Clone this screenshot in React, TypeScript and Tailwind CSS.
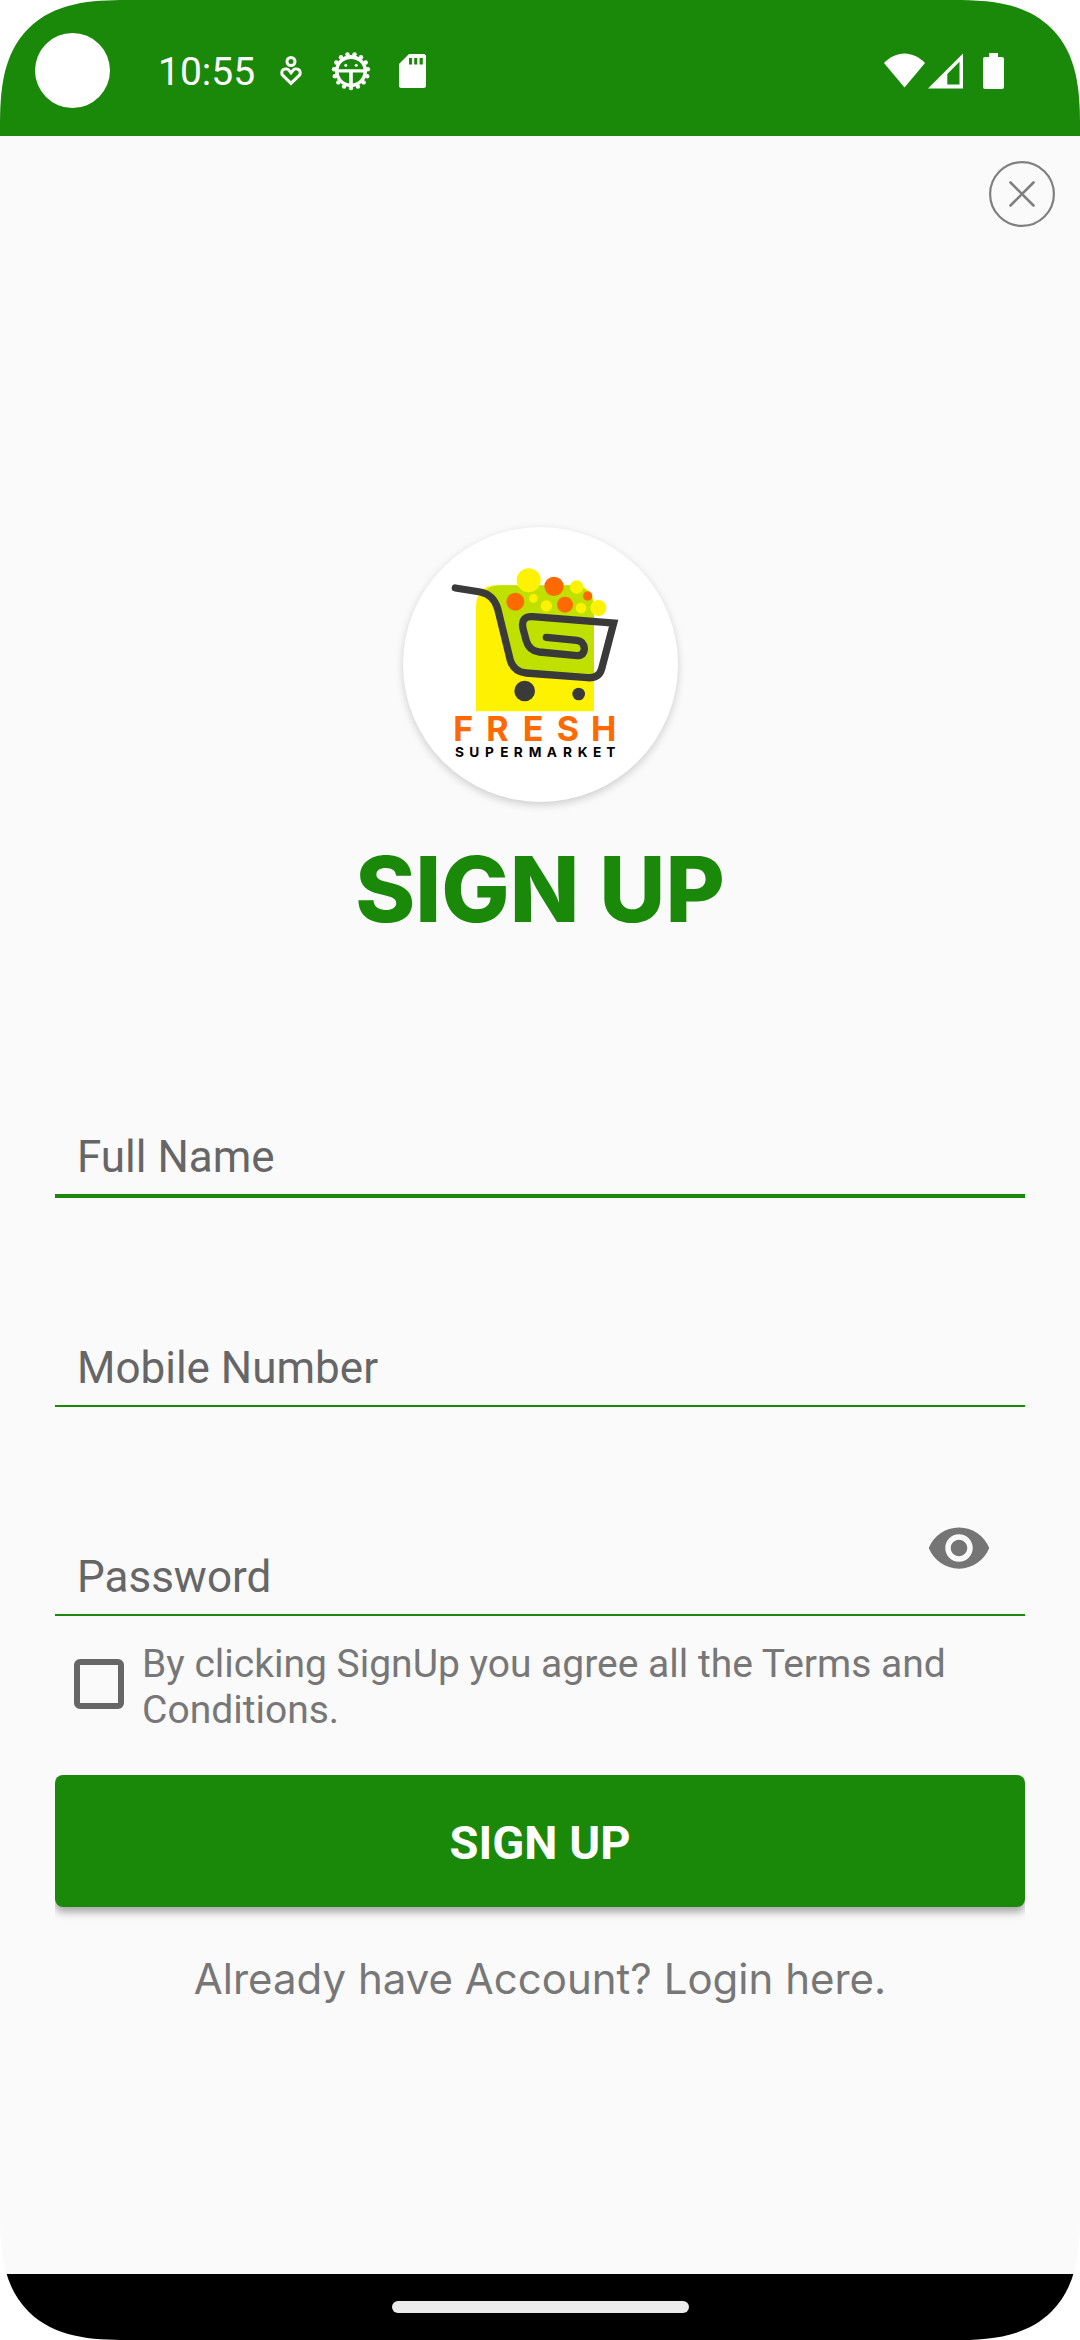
import { useState } from "react";

const GEAR_TEETH = Array.from({ length: 15 }, (_, i) => {
  const a = Math.PI / 2 + (i * 2 * Math.PI) / 15;
  return { x: 20 + 17 * Math.cos(a), y: 20 + 17 * Math.sin(a) };
});

function HeartPersonIcon() {
  return (
    <svg width="24" height="32" viewBox="0 0 24 32" fill="none" stroke="white" strokeWidth="3" aria-hidden="true">
      <circle cx="12" cy="6.5" r="4" />
      <path d="M12 28.4L3.8 20.4C2.2 18.7 2.4 15.9 4.4 14.6C6.6 13.3 9 14 10.2 15.6L12 17.8L13.8 15.6C15 14 17.4 13.3 19.6 14.6C21.6 15.9 21.8 18.7 20.2 20.4Z" />
    </svg>
  );
}

function GearIcon() {
  return (
    <svg width="40" height="40" viewBox="0 0 40 40" aria-hidden="true">
      <circle cx="20" cy="20" r="16" fill="white" />
      {GEAR_TEETH.map((t, i) => (
        <circle key={i} cx={t.x} cy={t.y} r="2.2" fill="white" />
      ))}
      <path d="M7.5 18.3C8.4 12.2 13.6 8 20 8S31.6 12.2 32.5 18.3Z" fill="#1a8808" />
      <path d="M7.6 21.6H18.2V32.6C12.6 32 8.3 27.4 7.6 21.6Z" fill="#1a8808" />
      <path d="M32.4 21.6H21.8V32.6C27.4 32 31.7 27.4 32.4 21.6Z" fill="#1a8808" />
      <circle cx="14.8" cy="14.2" r="1.5" fill="white" />
      <circle cx="25.2" cy="14.2" r="1.5" fill="white" />
    </svg>
  );
}

function SdCardIcon() {
  return (
    <svg width="27" height="34" viewBox="0 0 27 34" aria-hidden="true">
      <path d="M10 0H24.5Q27 0 27 2.5V31.5Q27 34 24.5 34H2.5Q0 34 0 31.5V10Z" fill="white" />
      <path d="M10 4H13V10.5H10ZM15.2 4H18.2V10.5H15.2ZM20.6 4H23.8V10.5H20.6Z" fill="#1a8808" />
    </svg>
  );
}

function WifiIcon() {
  return (
    <svg width="41" height="36" viewBox="0 0 41 36" aria-hidden="true">
      <path d="M20.5 34.5L0 10C6 4 13 .5 20.5 .5S35 4 41 10Z" fill="white" />
    </svg>
  );
}

function SignalIcon() {
  return (
    <svg width="35" height="36" viewBox="0 0 35 36" aria-hidden="true">
      <path fillRule="evenodd" d="M35 .5V35.5H0ZM31.5 8.8L19.3 21V31.5H31.5Z" fill="white" />
    </svg>
  );
}

function BatteryIcon() {
  return (
    <svg width="21" height="36" viewBox="0 0 21 36" aria-hidden="true">
      <path d="M6.2 0H15V4H19Q21 4 21 6V34Q21 36 19 36H2Q0 36 0 34V6Q0 4 2 4H6.2Z" fill="white" />
    </svg>
  );
}

function Logo() {
  return (
    <svg className="size-full" viewBox="36 50 825 825" role="img" aria-label="Fresh Supermarket">
      <path d="M255 603V290Q255 225 320 225H545Q609 225 609 290V603Z" fill="#fff200" />
      <path d="M280 246Q296 225 325 225H540Q609 228 609 300V503L405 488Q368 485 358 450L322 300Q310 255 280 246Z" fill="#c0e000" />
      <g fill="#fff200">
        <circle cx="413" cy="210" r="36" />
        <circle cx="557" cy="230" r="20" />
        <circle cx="427" cy="264" r="13" />
        <circle cx="466" cy="287" r="17" />
        <circle cx="570" cy="293" r="16" />
        <circle cx="622" cy="293" r="24" />
      </g>
      <g fill="#ff6a00">
        <circle cx="489" cy="228" r="29" />
        <circle cx="373" cy="274" r="27" />
        <circle cx="522" cy="283" r="24" />
        <circle cx="590" cy="257" r="14" />
      </g>
      <path
        d="M193 233L268 245Q308 253 320 295L358 450Q369 485 405 488L590 502Q624 504 632 475L668 338L425 319Q388 317 396 355L406 392Q414 421 445 425L558 436Q579 436 580 414Q578 393 558 390L466 381"
        fill="none"
        stroke="#3a3a3a"
        strokeWidth="22"
        strokeLinecap="round"
      />
      <circle cx="401" cy="542" r="31" fill="#3a3a3a" />
      <circle cx="563" cy="551" r="19" fill="#3a3a3a" />
      <text x="187 286 395 497 600" y="692" fill="#ff6a00" className="font-['Inter'] text-[102px] font-bold">
        FRESH
      </text>
      <text x="192 235 282 328 368 413 467 516 560 606 646" y="741" fill="black" className="font-['Inter'] text-[41px] font-bold">
        SUPERMARKET
      </text>
    </svg>
  );
}

const inputClass =
  "block h-[74px] w-full bg-transparent px-[22px] text-[44px] text-[#333] placeholder:text-[#666] placeholder:opacity-100 outline-none";

export default function App() {
  const [showPassword, setShowPassword] = useState(false);

  return (
    <div className="flex min-h-screen flex-col overflow-hidden rounded-[102px] bg-[#fafafa] font-['Roboto',sans-serif] supports-[corner-shape:squircle]:rounded-[127px] supports-[corner-shape:squircle]:[corner-shape:superellipse(1.45)]">
      <header className="flex h-[136px] items-center bg-[#1a8808] pt-1 pr-[76px] pl-[35px] text-white">
        <span className="size-[75px] rounded-full bg-white" />
        <time className="ml-12 pt-1 text-[39px] leading-none">10:55</time>
        <div className="ml-6 flex items-center pt-0.5">
          <HeartPersonIcon />
          <span className="ml-7 flex"><GearIcon /></span>
          <span className="ml-7 flex"><SdCardIcon /></span>
        </div>
        <div className="ml-auto flex items-center pt-0.5">
          <WifiIcon />
          <span className="ml-[3px] flex"><SignalIcon /></span>
          <span className="ml-5 flex"><BatteryIcon /></span>
        </div>
      </header>

      <main className="flex flex-1 flex-col">
        <div className="flex justify-end pt-[25px] pr-[25px]">
          <button type="button" aria-label="Close" className="size-[66px]">
            <svg viewBox="0 0 66 66" fill="none" stroke="#808080" strokeWidth="2.2" strokeLinecap="round">
              <circle cx="33" cy="33" r="31.9" />
              <path d="M21.5 21.5L44.5 44.5M44.5 21.5L21.5 44.5" strokeWidth="2.6" />
            </svg>
          </button>
        </div>

        <div className="mt-[300px] size-[275px] self-center rounded-full bg-white shadow-[0_3px_8px_rgba(0,0,0,0.18)]">
          <Logo />
        </div>
        <h1 className="mt-[37px] text-center font-['Inter'] text-[91px] leading-[100px] font-extrabold text-[#1a8808]">SIGN UP</h1>

        <form className="mt-[181px] flex flex-col px-[55px]" onSubmit={(e) => e.preventDefault()}>
          <div className="flex flex-col gap-[133px]">
            <div className="border-b-4 border-[#1a8808]">
              <input type="text" aria-label="Full Name" placeholder="Full Name" className={inputClass} />
            </div>
            <div className="border-b-2 border-[#1a8808]">
              <input type="tel" aria-label="Mobile Number" placeholder="Mobile Number" className={inputClass} />
            </div>
            <div className="relative border-b-2 border-[#1a8808]">
              <input
                type={showPassword ? "text" : "password"}
                aria-label="Password"
                placeholder="Password"
                className={inputClass}
              />
              <button
                type="button"
                aria-label="Show password"
                className="absolute -top-[25px] right-[33px] size-[66px]"
                onClick={() => setShowPassword(!showPassword)}
              >
                <svg viewBox="0 0 24 24" fill="#757575">
                  <path d="M12 4.5C7 4.5 2.73 7.61 1 12c1.73 4.39 6 7.5 11 7.5s9.27-3.11 11-7.5c-1.73-4.39-6-7.5-11-7.5zM12 17c-2.76 0-5-2.24-5-5s2.24-5 5-5 5 2.24 5 5-2.24 5-5 5zm0-8c-1.66 0-3 1.34-3 3s1.34 3 3 3 3-1.34 3-3-1.34-3-3-3z" />
                </svg>
              </button>
            </div>
          </div>

          <label className="mt-[25px] flex items-start pl-[19px] text-[39px] leading-[46px] text-[#777]">
            <input
              type="checkbox"
              className="mt-[18px] mr-[18px] size-[50px] shrink-0 appearance-none rounded-[6px] border-[6px] border-[#666] checked:bg-[#1a8808]"
            />
            <span>By clicking SignUp you agree all the Terms and Conditions.</span>
          </label>

          <button
            type="submit"
            className="mt-[42px] h-[132px] rounded-lg bg-[#1a8808] pt-1 text-[47px] font-bold text-white shadow-[0_5px_8px_rgba(0,0,0,0.35)] [clip-path:inset(0_0_-20px_0)]"
          >
            SIGN UP
          </button>
        </form>

        <a href="#login" className="mt-[42px] self-center font-['Inter'] text-[42px] leading-[60px] text-[#777]">
          Already have Account? Login here.
        </a>
      </main>

      <footer className="flex h-[66px] justify-center bg-black pt-[27px]">
        <span className="h-3 w-[297px] rounded-full bg-[#ebebeb]" />
      </footer>
    </div>
  );
}
